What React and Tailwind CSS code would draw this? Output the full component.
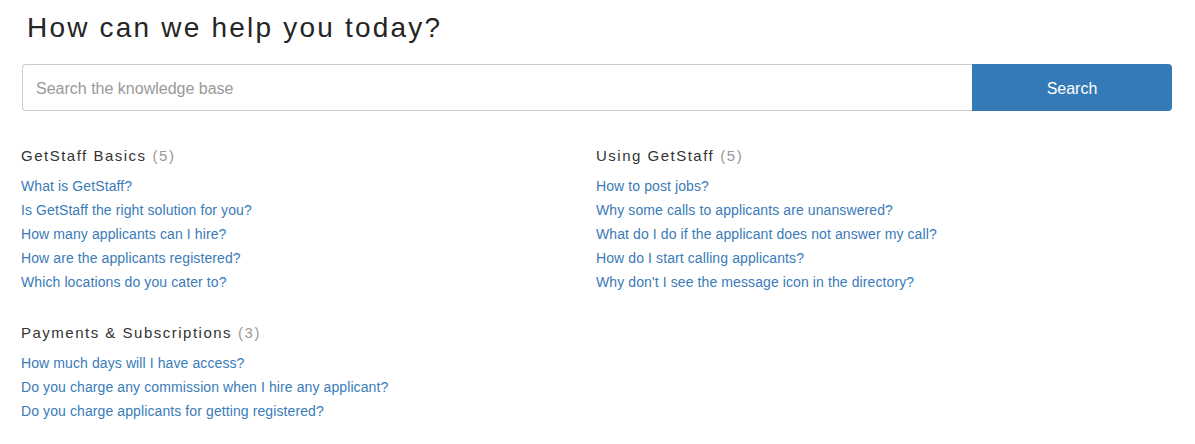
import React from 'react';

const sections = [
  {
    title: 'GetStaff Basics',
    links: [
      'What is GetStaff?',
      'Is GetStaff the right solution for you?',
      'How many applicants can I hire?',
      'How are the applicants registered?',
      'Which locations do you cater to?',
    ],
  },
  {
    title: 'Using GetStaff',
    links: [
      'How to post jobs?',
      'Why some calls to applicants are unanswered?',
      'What do I do if the applicant does not answer my call?',
      'How do I start calling applicants?',
      "Why don't I see the message icon in the directory?",
    ],
  },
  {
    title: 'Payments & Subscriptions',
    links: [
      'How much days will I have access?',
      'Do you charge any commission when I hire any applicant?',
      'Do you charge applicants for getting registered?',
    ],
  },
];

function Section({ section }) {
  return (
    <div>
      <h3 className="text-[15px] leading-[20px] tracking-[1.5px] text-[#333]">
        {section.title}
        <span className="ml-[6px] text-[#999]">({section.links.length})</span>
      </h3>
      <ul className="mt-[8px]">
        {section.links.map((link) => (
          <li key={link} className="text-[14px] leading-[24px] tracking-[0.1px]">
            <a href="#" className="text-[#3a7bb8] hover:underline">{link}</a>
          </li>
        ))}
      </ul>
    </div>
  );
}

export default function App() {
  return (
    <div className="bg-white min-h-[444px] px-[20px] pt-[12px] font-['Liberation_Sans',Arial,sans-serif]">
      <h1 className="pl-[7px] text-[28px] leading-[32px] tracking-[2.2px] text-[#252525]">
        How can we help you today?
      </h1>

      {/* search */}
      <div className="mt-[20px] ml-[2px] w-[1150px] h-[47px] flex">
        <input
          type="text"
          placeholder="Search the knowledge base"
          className="flex-1 h-full border border-[#ccc] border-r-0 rounded-l-[4px] px-[13px] pt-[2px] text-[16px] text-[#555] placeholder:text-[#999] outline-none"
        />
        <button className="w-[200px] h-full bg-[#337ab7] pt-[2px] text-white text-[16px] rounded-r-[4px]">
          Search
        </button>
      </div>

      <div className="pl-[1px]">
        <div className="mt-[35px] grid grid-cols-2 w-[1150px]">
          <Section section={sections[0]} />
          <Section section={sections[1]} />
        </div>
        <div className="mt-[29px]">
          <Section section={sections[2]} />
        </div>
      </div>
    </div>
  );
}
